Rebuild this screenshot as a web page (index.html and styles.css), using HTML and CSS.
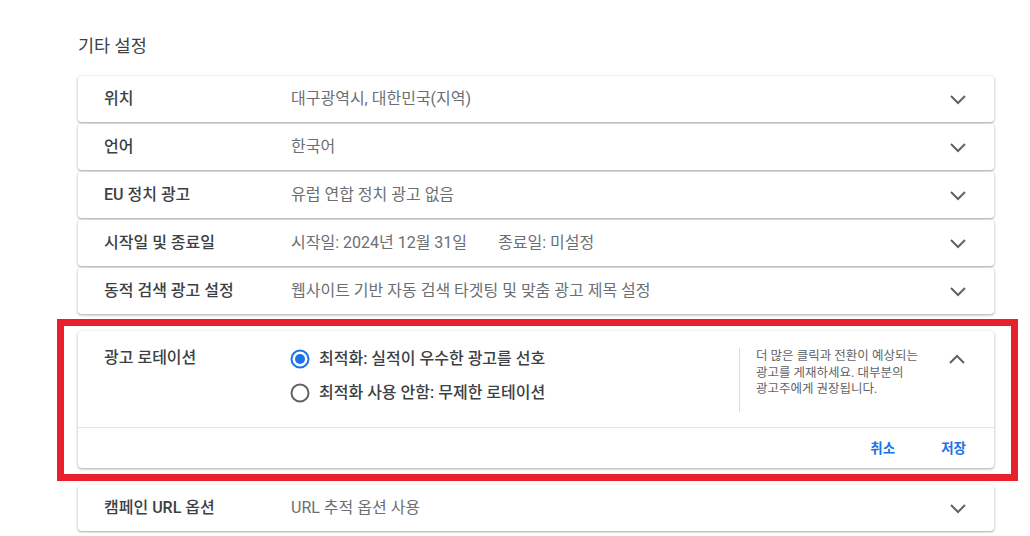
FILE: index.html
```html
<!DOCTYPE html>
<html lang="ko">
<head>
<meta charset="utf-8">
<title>기타 설정</title>
<link rel="stylesheet" href="styles.css">
</head>
<body>
<main class="page">
  <h2 class="section-title">기타 설정</h2>
  <div class="panel-list">
    <div class="card row">
      <div class="label">위치</div>
      <div class="value">대구광역시, 대한민국(지역)</div>
      <svg class="chev" viewBox="0 0 24 24" width="24" height="24"><path d="M5 9l7 7 7-7" /></svg>
    </div>
    <div class="card row">
      <div class="label">언어</div>
      <div class="value">한국어</div>
      <svg class="chev" viewBox="0 0 24 24" width="24" height="24"><path d="M5 9l7 7 7-7" /></svg>
    </div>
    <div class="card row">
      <div class="label">EU 정치 광고</div>
      <div class="value">유럽 연합 정치 광고 없음</div>
      <svg class="chev" viewBox="0 0 24 24" width="24" height="24"><path d="M5 9l7 7 7-7" /></svg>
    </div>
    <div class="card row">
      <div class="label">시작일 및 종료일</div>
      <div class="value"><span class="date-start">시작일: 2024년 12월 31일</span><span>종료일: 미설정</span></div>
      <svg class="chev" viewBox="0 0 24 24" width="24" height="24"><path d="M5 9l7 7 7-7" /></svg>
    </div>
    <div class="card row">
      <div class="label">동적 검색 광고 설정</div>
      <div class="value">웹사이트 기반 자동 검색 타겟팅 및 맞춤 광고 제목 설정</div>
      <svg class="chev" viewBox="0 0 24 24" width="24" height="24"><path d="M5 9l7 7 7-7" /></svg>
    </div>

    <div class="highlight">
      <div class="card expanded">
        <div class="exp-body">
          <div class="label">광고 로테이션</div>
          <div class="radios">
            <label class="radio-row">
              <svg class="radio" viewBox="0 0 20 20" width="20" height="20"><circle cx="10" cy="10" r="8.5" class="ring on"/><circle cx="10" cy="10" r="5" class="dot"/></svg>
              <span class="radio-text">최적화: 실적이 우수한 광고를 선호</span>
            </label>
            <label class="radio-row">
              <svg class="radio" viewBox="0 0 20 20" width="20" height="20"><circle cx="10" cy="10" r="8.5" class="ring"/></svg>
              <span class="radio-text">최적화 사용 안함: 무제한 로테이션</span>
            </label>
          </div>
          <div class="help">더 많은 클릭과 전환이 예상되는<br>광고를 게재하세요. 대부분의<br>광고주에게 권장됩니다.</div>
          <svg class="chev up" viewBox="0 0 24 24" width="24" height="24"><path d="M5 15l7-7 7 7" /></svg>
        </div>
        <div class="exp-footer">
          <button class="btn">취소</button>
          <button class="btn">저장</button>
        </div>
      </div>
    </div>

    <div class="card row">
      <div class="label">캠페인 URL 옵션</div>
      <div class="value">URL 추적 옵션 사용</div>
      <svg class="chev" viewBox="0 0 24 24" width="24" height="24"><path d="M5 9l7 7 7-7" /></svg>
    </div>
  </div>
</main>
</body>
</html>
```

FILE: styles.css
```css
* { box-sizing: border-box; }

html, body {
  margin: 0;
  padding: 0;
  background: #ffffff;
}

body {
  font-family: Roboto, "Noto Sans CJK KR", "Noto Sans", sans-serif;
  color: #3c4043;
  overflow: hidden;
}

.page {
  width: 1030px;
  padding: 0 36px 0 78px;
}

.section-title {
  margin: 36px 0 20px;
  font-size: 17.5px;
  line-height: 20px;
  font-weight: 400;
  color: #3c4043;
}

.panel-list {
  display: flex;
  flex-direction: column;
}

.card {
  background: #ffffff;
  border-radius: 4px;
  box-shadow: 0 1px 2px 0 rgba(60, 64, 67, 0.3), 0 1px 3px 1px rgba(60, 64, 67, 0.12);
}

.row {
  height: 46px;
  margin-bottom: 2px;
  display: flex;
  align-items: center;
  padding: 0 24px 0 26px;
}

.label {
  width: 187px;
  flex: none;
  font-size: 16px;
  line-height: 20px;
  font-weight: 500;
  color: #3c4043;
}

.value {
  flex: 1;
  font-size: 16px;
  line-height: 20px;
  color: #6b6f74;
}

.date-start {
  margin-right: 31px;
}

.chev {
  flex: none;
  fill: none;
  stroke: #5f6368;
  stroke-width: 2;
}

.highlight {
  margin: 3px -24px 4px -21px;
  border: 7px solid #e8202a;
  padding: 5px 17px 6px 14px;
}

.expanded {
  height: 137px;
  display: flex;
  flex-direction: column;
}

.exp-body {
  height: 97px;
  display: flex;
  align-items: flex-start;
  padding: 17px 25px 0 26px;
  border-bottom: 1px solid #e4e5e7;
}

.exp-body .label {
  width: 186px;
}

.radios {
  flex: 1;
  display: flex;
  flex-direction: column;
  gap: 12px;
}

.radio-row {
  display: flex;
  align-items: center;
  gap: 9px;
  height: 22px;
}

.radio {
  flex: none;
}

.ring {
  fill: none;
  stroke: #5f6368;
  stroke-width: 2;
}

.ring.on {
  stroke: #1a73e8;
}

.dot {
  fill: #1a73e8;
}

.radio-text {
  font-size: 16px;
  line-height: 20px;
  font-weight: 500;
  color: #3c4043;
}

.help {
  width: 196px;
  flex: none;
  min-height: 64px;
  border-left: 1px solid #dadce0;
  padding-left: 16px;
  font-size: 12.5px;
  line-height: 16.5px;
  color: #5f6368;
}

.chev.up {
  margin-left: 10px;
}

.exp-footer {
  flex: 1;
  display: flex;
  justify-content: flex-end;
  align-items: center;
  gap: 46px;
  padding-right: 28px;
}

.btn {
  border: none;
  background: none;
  padding: 0;
  font-family: inherit;
  font-size: 13.5px;
  line-height: 20px;
  font-weight: 700;
  color: #1a73e8;
  cursor: pointer;
}
```
